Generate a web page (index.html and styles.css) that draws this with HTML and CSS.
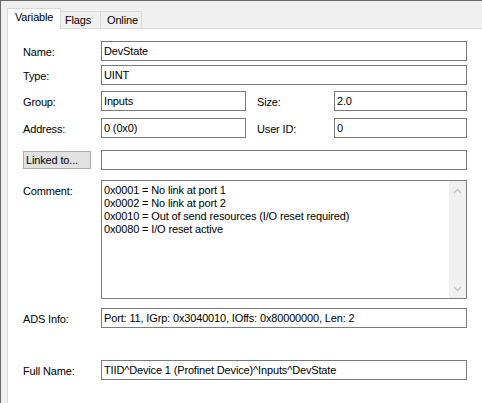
FILE: index.html
```html
<!DOCTYPE html>
<html lang="en">
<head>
    <meta charset="UTF-8">
    <title>Variable</title>
    <link rel="stylesheet" href="styles.css">
</head>
<body>
    <div class="window">
        <div class="tabs">
            <div class="tab tab-variable active">Variable</div>
            <div class="tab tab-flags">Flags</div>
            <div class="tab tab-online">Online</div>
        </div>
        <section class="panel">
            <div class="row row-name">
                <span class="label">Name:</span>
                <div class="field">DevState</div>
            </div>
            <div class="row row-type">
                <span class="label">Type:</span>
                <div class="field">UINT</div>
            </div>
            <div class="row split row-group">
                <span class="label">Group:</span>
                <div class="field">Inputs</div>
                <span class="label second">Size:</span>
                <div class="field">2.0</div>
            </div>
            <div class="row split row-address">
                <span class="label">Address:</span>
                <div class="field">0 (0x0)</div>
                <span class="label second">User ID:</span>
                <div class="field">0</div>
            </div>
            <div class="row row-linked">
                <div class="btn-cell"><button class="btn">Linked to...</button></div>
                <div class="field"></div>
            </div>
            <div class="row row-comment">
                <span class="label">Comment:</span>
                <div class="field memo">
                    <div class="memo-text">
                        0x0001 = No link at port 1<br>
                        0x0002 = No link at port 2<br>
                        0x0010 = Out of send resources (I/O reset required)<br>
                        0x0080 = I/O reset active
                    </div>
                    <div class="scrollbar">
                        <svg width="9" height="6" viewBox="0 0 9 6"><path d="M1 5 L4.5 1.5 L8 5" fill="none" stroke="#c2c2c2" stroke-width="1.3"/></svg>
                        <svg width="9" height="6" viewBox="0 0 9 6"><path d="M1 1 L4.5 4.5 L8 1" fill="none" stroke="#c2c2c2" stroke-width="1.3"/></svg>
                    </div>
                </div>
            </div>
            <div class="row row-ads">
                <span class="label">ADS Info:</span>
                <div class="field">Port: 11, IGrp: 0x3040010, IOffs: 0x80000000, Len: 2</div>
            </div>
            <div class="row row-full">
                <span class="label">Full Name:</span>
                <div class="field">TIID^Device 1 (Profinet Device)^Inputs^DevState</div>
            </div>
        </section>
    </div>
</body>
</html>
```

FILE: styles.css
```css
* {
    box-sizing: border-box;
}
body {
    margin: 0;
    font-family: "Liberation Sans", Arial, sans-serif;
    font-size: 11px;
    letter-spacing: -0.15px;
    color: #000000;
}
.window {
    height: 403px;
    background-color: #F0F0F0;
    border-top: 1px solid #696969;
    border-left: 1px solid #696969;
    padding-left: 6px;
    display: flex;
    flex-direction: column;
    overflow: hidden;
}
.tabs {
    height: 27px;
    flex-shrink: 0;
    display: flex;
    align-items: flex-end;
}
.tab {
    height: 17px;
    line-height: 13px;
    border: 1px solid #D9D9D9;
    border-bottom: 0;
    background-color: #F0F0F0;
    padding-top: 2px;
    margin-left: -1px;
}
.tab.active {
    height: 21px;
    margin-left: 0;
    margin-bottom: -1px;
    background-color: #FFFFFF;
    position: relative;
    z-index: 1;
}
.tab-variable {
    width: 54px;
    padding-left: 7px;
}
.tab-flags {
    width: 41px;
    padding-left: 4px;
}
.tab-online {
    width: 42px;
    padding-left: 6px;
}
.panel {
    flex: 1;
    background-color: #FFFFFF;
    border-top: 1px solid #D9D9D9;
    border-left: 1px solid #D9D9D9;
    padding: 12px 15px 0 15px;
}
.row {
    display: grid;
    grid-template-columns: 78px 1fr;
    height: 20px;
}
.row.split {
    grid-template-columns: 78px 145px 88px 1fr;
}
.label {
    padding-top: 5px;
    line-height: 13px;
    white-space: nowrap;
}
.label.second {
    padding-left: 11px;
}
.field {
    border: 1px solid #7A7A7A;
    height: 20px;
    padding: 3px 2px 0;
    line-height: 13px;
    white-space: nowrap;
    overflow: hidden;
}
.row-type {
    margin-top: 4px;
}
.row-group {
    margin-top: 6px;
}
.row-address {
    margin-top: 7px;
}
.row-linked {
    margin-top: 12px;
}
.btn-cell {
    padding-top: 1px;
}
.btn {
    display: block;
    width: 68px;
    height: 18px;
    padding: 0 0 0 2px;
    background-color: #E1E1E1;
    border: 1px solid #ADADAD;
    font: inherit;
    letter-spacing: inherit;
    line-height: 15px;
    text-align: left;
    color: #000000;
}
.row-comment {
    margin-top: 10px;
    height: 119px;
}
.memo {
    height: 119px;
    padding: 0;
    display: flex;
}
.memo-text {
    flex: 1;
    padding: 3px 2px 0;
}
.scrollbar {
    width: 17px;
    background-color: #F0F0F0;
    display: flex;
    flex-direction: column;
    justify-content: space-between;
    align-items: center;
    padding: 7px 0 6px;
}
.scrollbar svg {
    display: block;
}
.row-ads {
    margin-top: 9px;
}
.row-full {
    margin-top: 32px;
}
```
